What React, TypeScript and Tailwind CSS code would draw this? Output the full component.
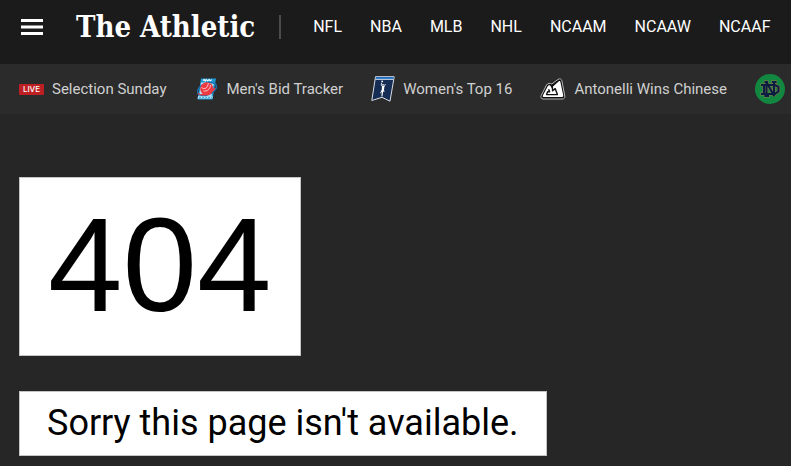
import type { ReactNode } from 'react';

const leagues = ['NFL', 'NBA', 'MLB', 'NHL', 'NCAAM', 'NCAAW', 'NCAAF'];

function MensIcon() {
  return (
    <svg viewBox="-1 0 24 22" className="w-6 h-[22px]" aria-hidden="true">
      <path d="M5 0.5H20L16.5 21.5H1.5Z" fill="#1c9ad6" />
      <path d="M7 2.5l1.2-1 1 1.5 1-1.5 1.5 1.3 1.3-1.3 1.2 1.3 1.6-1.2" fill="none" stroke="#fff" strokeWidth="1.1" />
      <path d="M5 4.5H18L15.6 18H3.2Z" fill="#b9e0f3" />
      <path d="M2 18.3H16.8L16.4 20.6H1.6Z" fill="#c4e6f6" />
      <path d="M3 19.6h13" stroke="#1c9ad6" strokeWidth="0.8" strokeDasharray="2 1" />
      <ellipse cx="11" cy="11" rx="10" ry="5.6" transform="rotate(-22 11 11)" fill="none" stroke="#176fae" strokeWidth="1.5" />
      <circle cx="10.8" cy="10.8" r="6.6" fill="#ee3a43" />
      <path d="M5.5 9.5c3 2.5 6.5 0.5 6.8-4.5M7.5 13c4 0.5 6.5-2 7-6" fill="none" stroke="#fff" strokeWidth="0.7" />
      <path d="M2 15.5c4 2.8 12 1 17-5.5" fill="none" stroke="#ee3a43" strokeWidth="1.5" />
    </svg>
  );
}

function WomensIcon() {
  return (
    <svg viewBox="0 0 24 26" className="w-6 h-[26px]" aria-hidden="true">
      <path d="M4.5 0.7H23.2L19 25.2L11 21.3L0.8 24.5Z" fill="#152c55" stroke="#d9dde4" strokeWidth="1" />
      <path d="M5 1.2H22.6L22.3 3H4.7Z" fill="#1b74cf" />
      <path d="M4.5 3.4H22.2" stroke="#fff" strokeWidth="0.8" />
      <circle cx="11.2" cy="5.4" r="0.9" fill="#fff" />
      <circle cx="12" cy="8.8" r="0.9" fill="#fff" />
      <path d="M10.6 6.8L10.2 9L11.4 10.6M14.4 8L13.2 10.6" fill="none" stroke="#fff" strokeWidth="0.8" />
      <path d="M11 10H13.4L13 14L13.6 16L12.2 15.6L11.4 20.5H10.4L10.8 15.5L9.6 17.4L9.2 17L10.8 13.5Z" fill="#fff" />
    </svg>
  );
}

function AntonelliIcon() {
  return (
    <svg viewBox="0 0 26 22" className="w-[26px] h-[22px]" aria-hidden="true">
      <path
        d="M3 21C1 21 0.5 19 1.3 17.3L6.5 7C7.5 5.2 10.5 5 11.8 6L18 1.4C19.8 0.2 21.6 1 21.9 2.8L24.8 18C25.2 19.9 24 21 22 21Z"
        fill="#111"
        stroke="#c8c8c8"
        strokeWidth="0.9"
      />
      <path
        d="M13 8.4L18.6 3.4C19.6 2.6 20.2 2.9 20.4 4L23.2 17.2C23.4 18.4 22.8 19 21.8 19H4C2.8 19 2.5 18.2 3 17.2L7.6 8.4C8.4 7 10 7 10.8 8.4L12.4 11Z"
        fill="#fff"
      />
      <path d="M8.6 11.2L9.6 13.8H7.6L6.6 16.6H17.4L15.2 10.6L12.6 12.8L12.2 7" fill="none" stroke="#111" strokeWidth="1.4" strokeLinejoin="round" />
    </svg>
  );
}

function NotreDameIcon() {
  return (
    <svg viewBox="0 0 30 30" className="w-[30px] h-[30px]" aria-hidden="true">
      <circle cx="15" cy="15" r="15" fill="#12873f" />
      <g fill="none" strokeLinecap="square">
        <g stroke="#8a7f48" strokeWidth="3.2">
          <path d="M7 11H20L23.5 13V17.5L20 20H7M9 11V20" />
          <path d="M11.5 22V8L19 22V8M10.5 8H12M18 8H20.5M10.5 22H13" />
        </g>
        <g stroke="#0c1f42" strokeWidth="2.2">
          <path d="M7 11H20L23.5 13V17.5L20 20H7M9 11V20" />
          <path d="M11.5 22V8L19 22V8M10.5 8H12M18 8H20.5M10.5 22H13" />
        </g>
      </g>
    </svg>
  );
}

const stories: { title: string; icon: ReactNode }[] = [
  {
    title: 'Selection Sunday',
    icon: (
      <span className="w-[25px] bg-[#bd2023] text-white text-center text-[8px] leading-[11px] font-[Inter,sans-serif] font-medium rounded-[1px]">
        LIVE
      </span>
    ),
  },
  { title: "Men's Bid Tracker", icon: <MensIcon /> },
  { title: "Women's Top 16", icon: <WomensIcon /> },
  { title: 'Antonelli Wins Chinese', icon: <AntonelliIcon /> },
];

function Header() {
  return (
    <header className="flex items-center h-16 pb-2.5 pl-5 bg-[#1b1b1b] text-white overflow-hidden">
      <button type="button" aria-label="Menu" className="shrink-0">
        <svg viewBox="0 0 24 18" className="w-6 h-[18px]" aria-hidden="true">
          <path d="M1 2.5H23M1 9H23M1 15.5H23" stroke="#fff" strokeWidth="3" />
        </svg>
      </button>
      <a href="#" className="shrink-0 ml-8 font-['DejaVu_Serif_Condensed','DejaVu_Serif',serif] font-bold text-[29px] leading-8 whitespace-nowrap">
        The Athletic
      </a>
      <div className="shrink-0 w-0.5 h-6 ml-6 bg-[#4b4b4b]"></div>
      <nav className="flex gap-7 ml-8">
        {leagues.map((league) => (
          <a key={league} href="#" className="text-base">
            {league}
          </a>
        ))}
      </nav>
    </header>
  );
}

function Ticker() {
  return (
    <nav className="flex items-center gap-7 h-[50px] pl-[19px] bg-[#2b2b2b] text-[#d0d0d0] overflow-hidden">
      {stories.map((story) => (
        <a key={story.title} href="#" className="flex shrink-0 items-center gap-2 text-[15px] whitespace-nowrap">
          {story.icon}
          {story.title}
        </a>
      ))}
      <a href="#" aria-label="Notre Dame" className="shrink-0">
        <NotreDameIcon />
      </a>
    </nav>
  );
}

export default function App() {
  return (
    <div className="min-h-screen bg-[#262626] font-[Roboto,sans-serif]">
      <Header />
      <Ticker />
      <main className="flex flex-col items-start gap-[35px] px-[19px] pt-[63px] pb-2.5 text-black">
        <h1 className="bg-white border border-[#c4c4c4] px-7 pb-1 font-['Liberation_Sans',sans-serif] text-[134px] leading-[173px]">
          404
        </h1>
        <p className="bg-white border border-[#c4c4c4] px-[27px] text-4xl leading-[63px]">
          Sorry this page isn't available.
        </p>
      </main>
    </div>
  );
}
